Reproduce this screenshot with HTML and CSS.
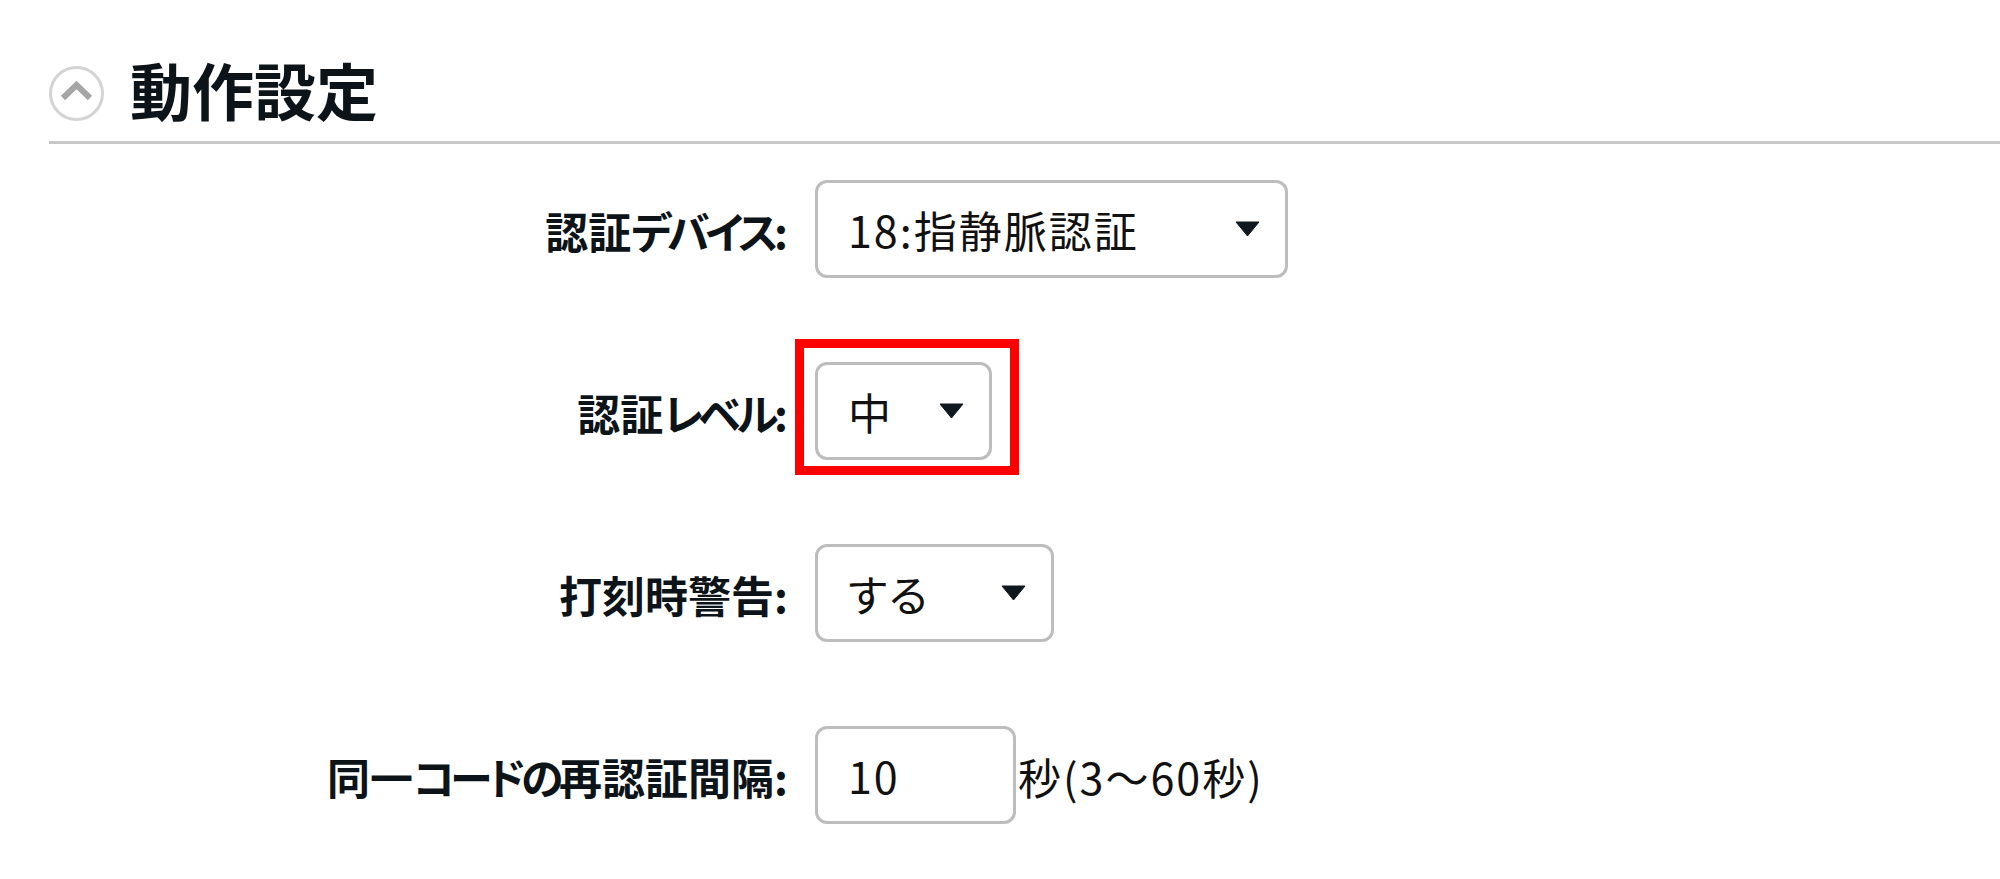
FILE: index.html
```html
<!DOCTYPE html>
<html lang="ja">
<head>
  <meta charset="UTF-8">
  <title>動作設定</title>
  <link rel="stylesheet" href="styles.css">
</head>
<body>

  <div class="section-head">
    <svg class="toggle-icon" viewBox="0 0 55 55">
      <circle cx="27.5" cy="27.5" r="26" fill="#fff" stroke="#d4d4d4" stroke-width="3"/>
      <path d="M14 32 L27.5 19 L41 32" fill="none" stroke="#a6a6a6" stroke-width="6"/>
    </svg>
    <h1>動作設定</h1>
  </div>

  <div class="form">
    <div class="row">
      <label class="row-label">認証<span class="kana">デバイス</span>:</label>
      <div class="select-box w-device">
        <select class="field"><option>18:指静脈認証</option></select>
        <svg class="arrow" viewBox="0 0 25 16"><path d="M1 1 H24 L12.5 15 Z" stroke="#10181f" stroke-linejoin="round" fill="#10181f"/></svg>
      </div>
    </div>

    <div class="row">
      <label class="row-label">認証<span class="kana">レベル</span>:</label>
      <div class="select-box w-level">
        <select class="field"><option>中</option></select>
        <svg class="arrow" viewBox="0 0 25 16"><path d="M1 1 H24 L12.5 15 Z" stroke="#10181f" stroke-linejoin="round" fill="#10181f"/></svg>
        <div class="highlight"></div>
      </div>
    </div>

    <div class="row">
      <label class="row-label">打刻時警告:</label>
      <div class="select-box w-warn">
        <select class="field"><option>する</option></select>
        <svg class="arrow" viewBox="0 0 25 16"><path d="M1 1 H24 L12.5 15 Z" stroke="#10181f" stroke-linejoin="round" fill="#10181f"/></svg>
      </div>
    </div>

    <div class="row">
      <label class="row-label">同一<span class="kana">コードの</span>再認証間隔:</label>
      <input class="field w-interval" type="text" value="10">
      <span class="suffix">秒(3～60秒)</span>
    </div>
  </div>

</body>
</html>
```

FILE: styles.css
```css
body {
  margin: 0;
  background: #fff;
  color: #0d1419;
  font-family: "Noto Sans CJK JP", "Noto Sans", sans-serif;
  font-feature-settings: "palt";
}

.section-head {
  display: flex;
  align-items: center;
  margin-left: 49px;
  padding-top: 61px;
  height: 80px;
  border-bottom: 3px solid #c8c8c8;
}

.toggle-icon {
  width: 55px;
  height: 55px;
  margin-right: 26px;
  margin-bottom: 16px;
}

h1 {
  margin: 0 0 24px;
  font-size: 62px;
  line-height: 62px;
  font-weight: 700;
  font-feature-settings: normal;
}

.form {
  padding-top: 36px;
}

.row {
  display: flex;
  align-items: center;
  height: 98px;
  margin-bottom: 84px;
}

.row-label {
  width: 788px;
  margin-right: 27px;
  text-align: right;
  font-size: 43px;
  font-weight: 700;
  position: relative;
  top: 1px;
}

.kana {
  letter-spacing: -4.5px;
}

.select-box {
  position: relative;
  height: 98px;
}

.field {
  display: block;
  box-sizing: border-box;
  width: 100%;
  height: 98px;
  padding: 0 0 0 30px;
  border: 3px solid #bdbdbd;
  border-radius: 12px;
  background: #fff;
  color: #111;
  font-family: inherit;
  font-size: 43px;
  font-feature-settings: "palt";
  letter-spacing: 2px;
  appearance: none;
  outline: none;
}

.arrow {
  position: absolute;
  top: 41px;
  right: 28px;
  width: 25px;
  height: 16px;
}

.w-device { width: 473px; }
.w-level { width: 177px; }
.w-warn { width: 239px; }
.w-interval { width: 201px; }

.suffix {
  margin-left: 2px;
  font-size: 43px;
  letter-spacing: 2px;
  color: #111;
  position: relative;
  top: 1px;
}

.highlight {
  position: absolute;
  top: -23px;
  left: -20px;
  width: 224px;
  height: 136px;
  box-sizing: border-box;
  border: 9px solid #ff0000;
}
```
